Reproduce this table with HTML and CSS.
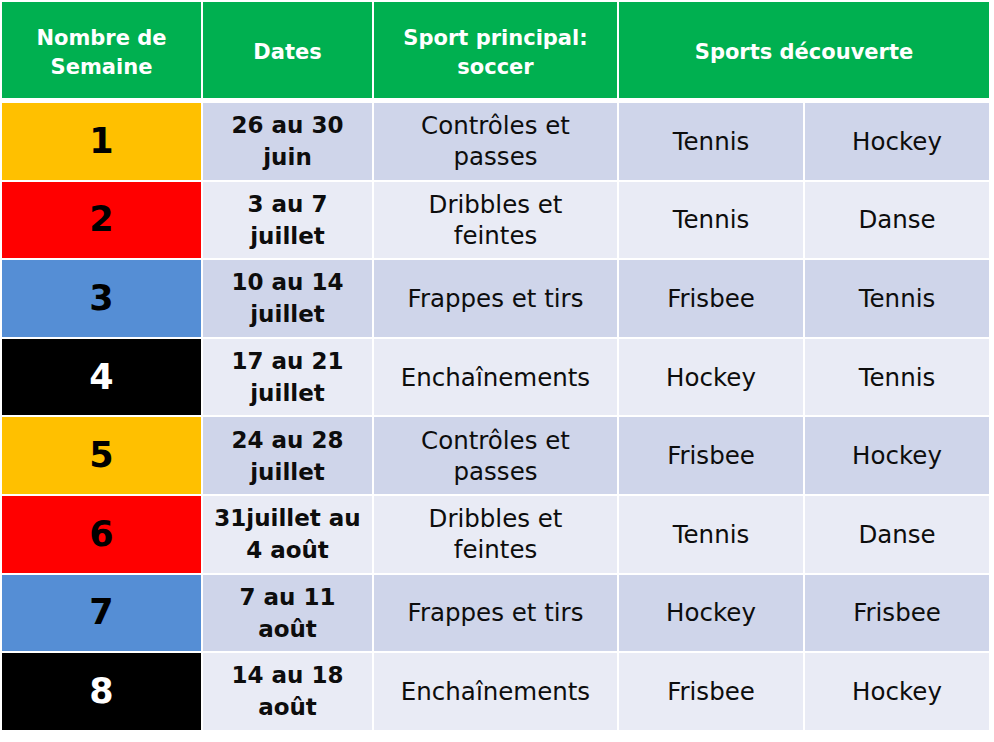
FILE: index.html
```html
<!DOCTYPE html>
<html lang="fr">
<head>
<meta charset="utf-8">
<title>Camp de soccer – calendrier</title>
<link rel="stylesheet" href="styles.css">
</head>
<body>
<table class="schedule">
  <colgroup>
    <col class="c-week">
    <col class="c-dates">
    <col class="c-main">
    <col class="c-disc">
    <col class="c-disc">
  </colgroup>
  <thead>
    <tr>
      <th>Nombre de<br>Semaine</th>
      <th>Dates</th>
      <th>Sport principal:<br>soccer</th>
      <th colspan="2">Sports découverte</th>
    </tr>
  </thead>
  <tbody>
    <tr class="odd">
      <td class="week yellow">1</td>
      <td class="dates">26 au 30<br>juin</td>
      <td>Contrôles et<br>passes</td>
      <td>Tennis</td>
      <td>Hockey</td>
    </tr>
    <tr class="even">
      <td class="week red">2</td>
      <td class="dates">3 au 7<br>juillet</td>
      <td>Dribbles et<br>feintes</td>
      <td>Tennis</td>
      <td>Danse</td>
    </tr>
    <tr class="odd">
      <td class="week blue">3</td>
      <td class="dates">10 au 14<br>juillet</td>
      <td>Frappes et tirs</td>
      <td>Frisbee</td>
      <td>Tennis</td>
    </tr>
    <tr class="even">
      <td class="week black">4</td>
      <td class="dates">17 au 21<br>juillet</td>
      <td>Enchaînements</td>
      <td>Hockey</td>
      <td>Tennis</td>
    </tr>
    <tr class="odd">
      <td class="week yellow">5</td>
      <td class="dates">24 au 28<br>juillet</td>
      <td>Contrôles et<br>passes</td>
      <td>Frisbee</td>
      <td>Hockey</td>
    </tr>
    <tr class="even">
      <td class="week red">6</td>
      <td class="dates">31juillet au<br>4 août</td>
      <td>Dribbles et<br>feintes</td>
      <td>Tennis</td>
      <td>Danse</td>
    </tr>
    <tr class="odd">
      <td class="week blue">7</td>
      <td class="dates">7 au 11<br>août</td>
      <td>Frappes et tirs</td>
      <td>Hockey</td>
      <td>Frisbee</td>
    </tr>
    <tr class="even">
      <td class="week black">8</td>
      <td class="dates">14 au 18<br>août</td>
      <td>Enchaînements</td>
      <td>Frisbee</td>
      <td>Hockey</td>
    </tr>
  </tbody>
</table>
</body>
</html>
```

FILE: styles.css
```css
html, body {
  margin: 0;
  padding: 0;
  background: #ffffff;
}

body {
  font-family: "DejaVu Sans", "Liberation Sans", sans-serif;
  color: #0d0d0d;
}

.schedule {
  border-collapse: separate;
  border-spacing: 2px;
  table-layout: fixed;
  width: 991px;
}

.c-week { width: 199px; }
.c-dates { width: 169px; }
.c-main { width: 243px; }
.c-disc { width: 184px; }

.schedule th {
  background: #00b050;
  color: #ffffff;
  font-size: 21px;
  font-weight: bold;
  line-height: 29px;
  height: 91px;
  padding: 5px 4px 0;
  border-bottom: 3px solid #ffffff;
  text-align: center;
  vertical-align: middle;
}

.schedule td {
  height: 76.6px;
  padding: 0 4px;
  font-size: 24.5px;
  line-height: 31px;
  text-align: center;
  vertical-align: middle;
}

.odd td { background: #cfd5ea; }
.even td { background: #e9ebf5; }

.schedule td.dates {
  font-weight: bold;
  font-size: 23px;
  line-height: 32px;
}

.schedule td.week {
  font-weight: bold;
  font-size: 35px;
}

.schedule td.yellow { background: #ffc000; color: #000000; }
.schedule td.red { background: #ff0000; color: #000000; }
.schedule td.blue { background: #558ed5; color: #000000; }
.schedule td.black { background: #000000; color: #ffffff; }
```
